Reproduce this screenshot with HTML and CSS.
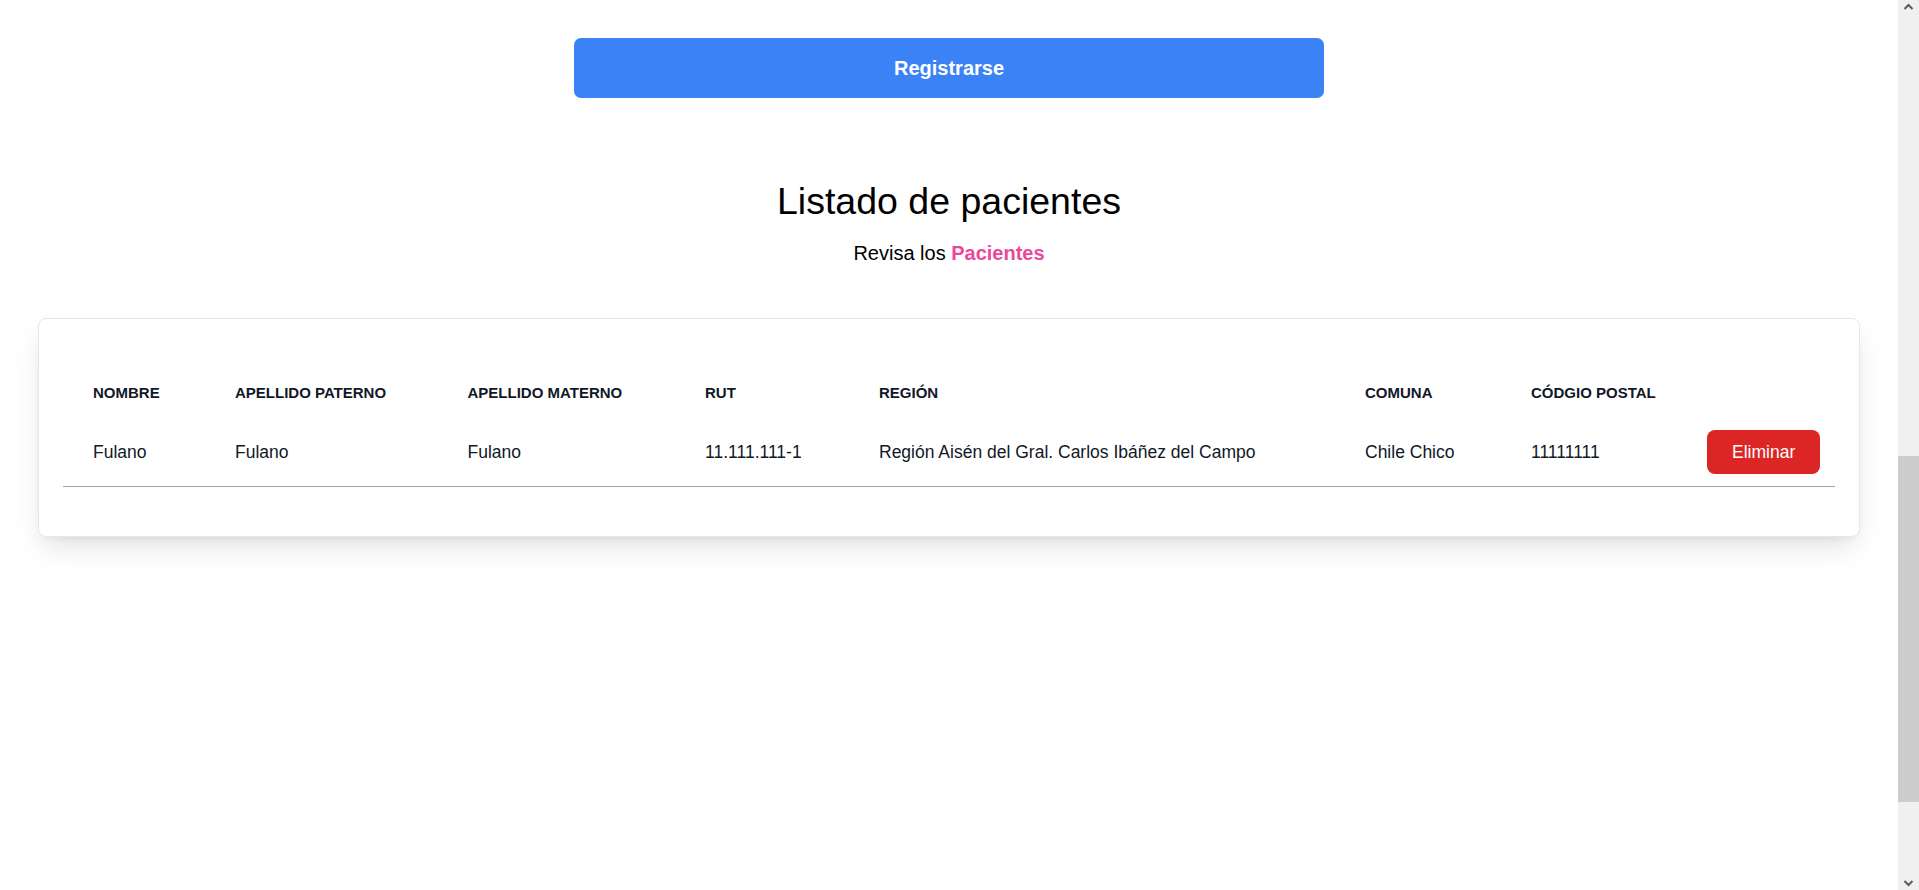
FILE: index.html
```html
<!DOCTYPE html>
<html lang="es">
<head>
<meta charset="utf-8">
<title>Pacientes</title>
<link rel="stylesheet" href="styles.css">
</head>
<body>
<div class="window">
  <main class="page">
    <div class="register-wrap">
      <button class="btn-register" type="button">Registrarse</button>
    </div>
    <section class="list-head">
      <h2 class="list-title">Listado de pacientes</h2>
      <p class="list-sub">Revisa los <span class="accent">Pacientes</span></p>
    </section>
    <div class="card">
      <table class="patients">
        <colgroup>
          <col class="c1"><col class="c2"><col class="c3"><col class="c4">
          <col class="c5"><col class="c6"><col class="c7"><col class="c8">
        </colgroup>
        <thead>
          <tr>
            <th>Nombre</th>
            <th>Apellido Paterno</th>
            <th>Apellido Materno</th>
            <th>Rut</th>
            <th>Región</th>
            <th>Comuna</th>
            <th>Códgio Postal</th>
            <th></th>
          </tr>
        </thead>
        <tbody>
          <tr>
            <td>Fulano</td>
            <td>Fulano</td>
            <td>Fulano</td>
            <td>11.111.111-1</td>
            <td>Región Aisén del Gral. Carlos Ibáñez del Campo</td>
            <td>Chile Chico</td>
            <td>11111111</td>
            <td class="action"><button class="btn-delete" type="button">Eliminar</button></td>
          </tr>
        </tbody>
      </table>
    </div>
  </main>
  <div class="scrollbar" aria-hidden="true">
    <div class="sb-btn">
      <svg width="21" height="17" viewBox="0 0 21 17"><path d="M6.5 9 L10.5 5 L14.5 9" fill="none" stroke="#5a5a5a" stroke-width="2"/></svg>
    </div>
    <div class="sb-track">
      <div class="sb-thumb"></div>
    </div>
    <div class="sb-btn">
      <svg width="21" height="17" viewBox="0 0 21 17"><path d="M6.5 8 L10.5 12 L14.5 8" fill="none" stroke="#5a5a5a" stroke-width="2"/></svg>
    </div>
  </div>
</div>
</body>
</html>
```

FILE: styles.css
```css
body {
  margin: 0;
  background: #ffffff;
  font-family: "Liberation Sans", Arial, sans-serif;
  color: #000000;
  overflow: hidden;
}

.window {
  display: flex;
  height: 890px;
}

.page {
  flex: 1;
  min-width: 0;
  display: flex;
  flex-direction: column;
  padding-top: 38px;
}

.register-wrap {
  display: flex;
  justify-content: center;
}

.btn-register {
  width: 750px;
  height: 60px;
  border: 0;
  border-radius: 7px;
  background: #3b82f6;
  color: #ffffff;
  font-family: "Liberation Sans", Arial, sans-serif;
  font-size: 20px;
  font-weight: 700;
  cursor: pointer;
}

.list-head {
  margin-top: 81px;
  text-align: center;
}

.list-title {
  margin: 0;
  font-size: 37.5px;
  line-height: 45px;
  font-weight: 400;
  color: #000000;
}

.list-sub {
  margin: 13.5px 0 0;
  font-size: 20px;
  line-height: 30px;
  color: #000000;
}

.accent {
  color: #ec4899;
  font-weight: 700;
}

.card {
  margin: 50.5px 38px 0;
  padding: 49px 24px;
  border: 1px solid #e5e7eb;
  border-radius: 8px;
  background: #ffffff;
  box-shadow: 0 14px 30px -6px rgba(0, 0, 0, 0.13), 0 5px 10px -5px rgba(0, 0, 0, 0.08);
}

.patients {
  width: 100%;
  border-collapse: collapse;
  table-layout: fixed;
  color: #111827;
}

.c1 { width: 142px; }
.c2 { width: 232.5px; }
.c3 { width: 237.5px; }
.c4 { width: 174px; }
.c5 { width: 486px; }
.c6 { width: 166px; }
.c7 { width: 176px; }
.c8 { width: 158px; }

.patients th {
  padding: 15px 0 15px 30px;
  text-align: left;
  font-size: 15px;
  line-height: 20px;
  font-weight: 700;
  text-transform: uppercase;
  white-space: nowrap;
}

.patients td {
  padding: 12px 0 12px 30px;
  font-size: 17.5px;
  line-height: 25px;
  vertical-align: middle;
  white-space: nowrap;
  border-bottom: 1px solid #9ca3af;
}

.btn-delete {
  display: block;
  height: 44px;
  padding: 0 25px;
  border: 0;
  border-radius: 8px;
  background: #dc2626;
  color: #ffffff;
  font-family: "Liberation Sans", Arial, sans-serif;
  font-size: 17.5px;
  cursor: pointer;
}

.scrollbar {
  width: 21px;
  flex: none;
  display: flex;
  flex-direction: column;
  background: #f0f0f0;
}

.sb-btn {
  height: 17px;
  flex: none;
}

.sb-btn svg {
  display: block;
}

.sb-track {
  flex: 1;
  display: flex;
  flex-direction: column;
}

.sb-thumb {
  margin-top: 439px;
  height: 346px;
  background: #cdcdcd;
}
```
